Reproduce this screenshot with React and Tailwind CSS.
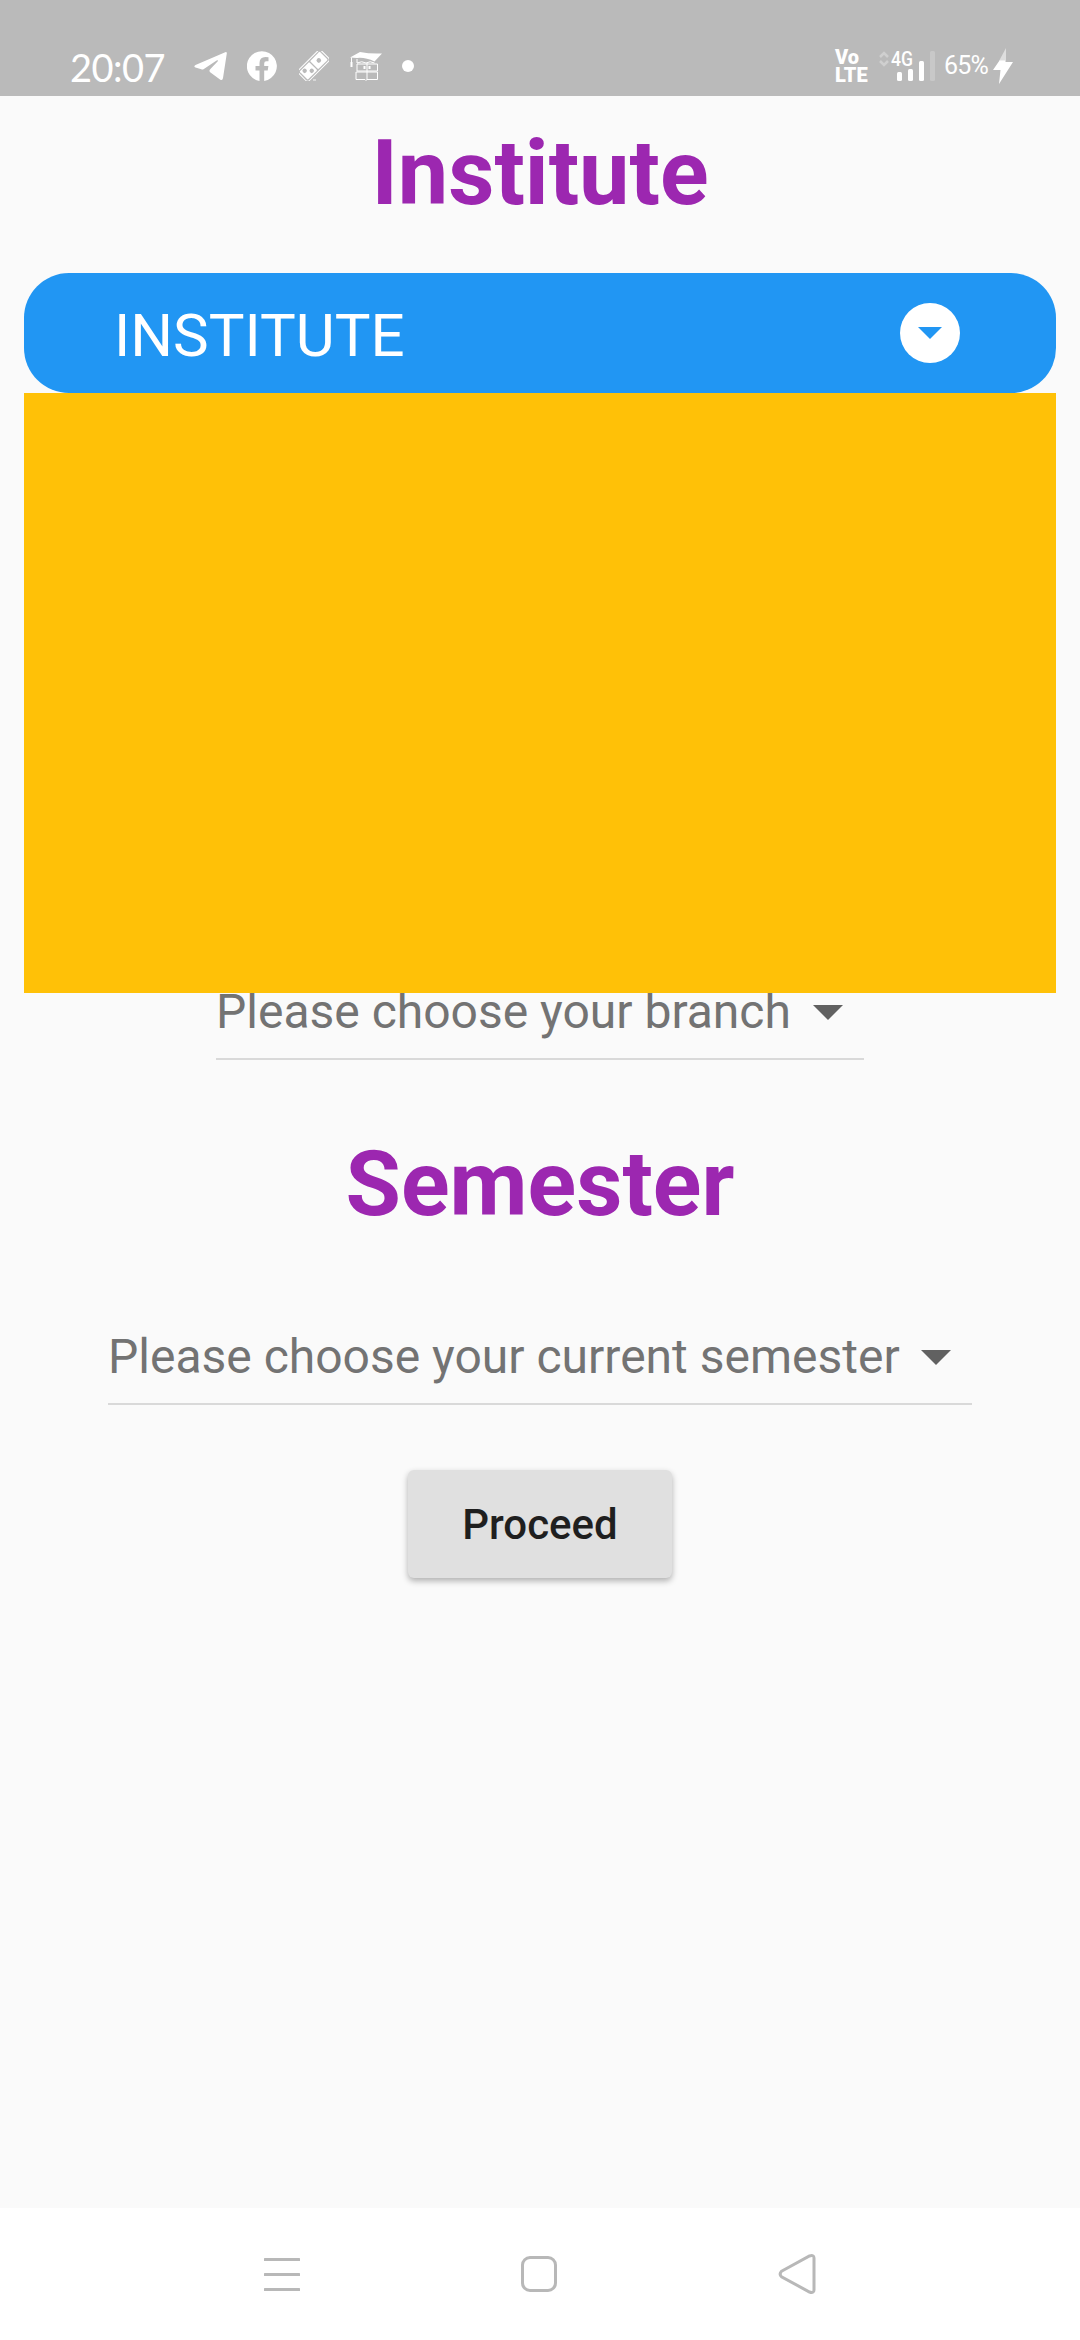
function StatusBar() {
  return (
    <header className="h-24 bg-[#bababa] text-white flex items-center justify-between pt-9 pl-[70px] pr-[67px]">
      <div className="flex items-center h-[60px]">
        <span className="font-['Lato',sans-serif] text-[38px] leading-[60px] w-[124px] tracking-[-0.5px] whitespace-nowrap pt-0.5">20:07</span>
        <svg className="w-[33px] h-[30px]" viewBox="0 0 33 30" fill="currentColor">
          <path d="M31.2 1.2Q33 .5 32.8 2.6L29 27Q28.5 30 26 28.4L16.5 21.5Q14.600 20 16.200 18.200L24 10Q24.300 8.600 22.600 9.600L9.500 18.200Q8.500 18.700 7.300 18.300L1.500 16.500Q-.8 15.500 1.500 14Z" />
        </svg>
        <svg className="w-[30px] h-[30px] ml-5" viewBox="0 0 30 30" fill="currentColor">
          <path d="M12.500 30V19.500H8.500V15H12.500V12Q12.500 6 18.500 6Q20.300 6 21.500 6.300V10.200H19.300Q17.200 10.200 17.200 12.400V15H21.400L20.700 19.500H17.200V30A15 15 0 1 0 12.500 30Z" />
        </svg>
        <svg className="w-[30px] h-[30px] ml-[22px]" viewBox="0 0 30 30">
          <g transform="rotate(-45 15 15)">
            <rect x="-1" y="7" width="32" height="15" rx="2.500" fill="none" stroke="#fff" strokeWidth="1" />
            <rect x="0.800" y="8.700" width="13.600" height="11.600" rx="1" fill="#fff" />
            <rect x="15.600" y="8.700" width="13.600" height="11.600" rx="1" fill="#fff" />
            <circle cx="5" cy="11.800" r="2.200" fill="#bababa" />
            <circle cx="10" cy="16.800" r="2.200" fill="#bababa" />
            <circle cx="22.300" cy="14.500" r="2.300" fill="#bababa" />
          </g>
          <path d="M14 29H17" stroke="#e0e0e0" strokeWidth="1.500" />
        </svg>
        <svg className="w-8 h-[30px] ml-[21px]" viewBox="0 0 32 30" fill="none" stroke="#fff">
          <path d="M0 6.500L10 1Q20 3 32 2.500L24.500 10.500Q15 6 7 7Z" fill="#fff" stroke="none" />
          <path d="M1.500 6.500V11M7 8V12Q12 9.500 16 12Q20 9.500 24.500 12M7 13H27.500V20H7ZM6 21H27.500V28.500H17L16 29.500L15 28.500H6ZM17 12V29" />
          <path d="M1.500 11V16" strokeWidth="2" />
          <path d="M14.500 15V18M19.500 15V18" strokeWidth="2" />
        </svg>
        <span className="w-3 h-3 rounded-full bg-white ml-5" />
      </div>
      <div className="flex items-center h-[60px]">
        <div className="font-['Roboto',sans-serif] font-black text-[20px] leading-[18px] w-[34px]">
          Vo
          <br />
          LTE
        </div>
        <svg className="w-14 h-9 ml-[10px]" viewBox="0 0 56 36">
          <path d="M1 9L5 5L9 9M1 13L5 17L9 13" fill="none" stroke="#cfcfcf" strokeWidth="2.500" />
          <text x="12" y="18" fontSize="20" fontFamily="Roboto" fontWeight="500" fill="#fff" textLength="22" lengthAdjust="spacingAndGlyphs">4G</text>
          <rect x="18" y="24" width="5" height="9" rx="1.500" fill="#fff" />
          <rect x="29" y="21" width="5" height="12" rx="1.500" fill="#fff" />
          <rect x="40" y="13" width="5" height="20" rx="1.500" fill="#fff" />
          <rect x="51" y="3" width="5" height="30" rx="1.500" fill="#c8c8c8" />
        </svg>
        <span className="font-['Roboto',sans-serif] text-[25px] tracking-[-0.8px] ml-[9px] w-[49px] whitespace-nowrap">65%</span>
        <svg className="w-5 h-9" viewBox="0 0 20 36">
          <path d="M13 0L6 13H12V14H13Z" fill="#dedede" />
          <path d="M6.500 12.500L0 22H7.500L6 36L20 14H12V12.500Z" fill="#fff" />
        </svg>
      </div>
    </header>
  );
}

function Heading({ children, className }) {
  return <h1 className={`font-['Roboto',sans-serif] font-bold text-[90px] leading-[105px] text-center text-[#9c27b0] ${className}`}>{children}</h1>;
}

function Caret({ className }) {
  return (
    <svg className={className} viewBox="0 0 30 15" fill="currentColor">
      <path d="M0 0H30L15 15Z" />
    </svg>
  );
}

function Dropdown({ label, className }) {
  return (
    <div className={`font-['Roboto',sans-serif] mx-auto flex items-start justify-between border-b-2 border-[#d9d9d9] text-[48px] leading-[56px] text-[#737373] whitespace-nowrap ${className}`}>
      <span>{label}</span>
      <Caret className="w-[30px] h-[15px] mt-[21px] mr-[21px] text-[#616161]" />
    </div>
  );
}

function NavBar() {
  return (
    <nav className="h-[132px] bg-white flex items-center justify-between px-[264px]">
      <svg className="w-9 h-10" viewBox="0 0 36 40" fill="#b8b8b8">
        <rect y="4" width="36" height="3" rx="0.500" />
        <rect y="19" width="36" height="3" rx="0.500" />
        <rect y="34" width="36" height="3" rx="0.500" />
      </svg>
      <span className="w-9 h-9 rounded-[9px] border-[3px] border-[#b8b8b8]" />
      <svg className="w-[38px] h-10" viewBox="0 0 38 40" fill="none" stroke="#b8b8b8" strokeWidth="3">
        <path d="M3.500 17.200L31.500 2Q36 .5 36 4V36Q36 39.500 31.500 38L3.500 22.800Q.8 20 3.500 17.200Z" />
      </svg>
    </nav>
  );
}

export default function App() {
  return (
    <div className="w-[1080px] h-[2340px] bg-[#fafafa] flex flex-col overflow-hidden">
      <StatusBar />
      <main className="flex-1 min-h-0 flex flex-col">
        <Heading className="mt-[25px]">Institute</Heading>
        <div className="mx-6 mt-[47px] h-[120px] shrink-0 rounded-[45px] bg-[#2196f3] flex items-center justify-between pl-[90px] pr-24">
          <span className="font-['Roboto',sans-serif] text-[60px] leading-[70px] text-white pt-[5px]">INSTITUTE</span>
          <span className="w-[60px] h-[60px] rounded-full bg-white flex items-center justify-center">
            <Caret className="w-6 h-3 text-[#2196f3]" />
          </span>
        </div>
        <div className="relative z-10 mx-6 h-[600px] shrink-0 bg-[#ffc107]" />
        <Dropdown label="Please choose your branch" className="w-[648px] h-[76px] -mt-[9px]" />
        <Heading className="mt-[72px]">Semester</Heading>
        <Dropdown label="Please choose your current semester" className="w-[864px] h-[76px] mt-[92px]" />
        <button className="font-['Roboto',sans-serif] font-medium mx-auto mt-[65px] w-[264px] h-[108px] shrink-0 rounded-md bg-[#e0e0e0] text-[42px] leading-[49px] text-[#1f1f1f] shadow-[0_3px_6px_rgba(0,0,0,0.3)]">Proceed</button>
      </main>
      <NavBar />
    </div>
  );
}
